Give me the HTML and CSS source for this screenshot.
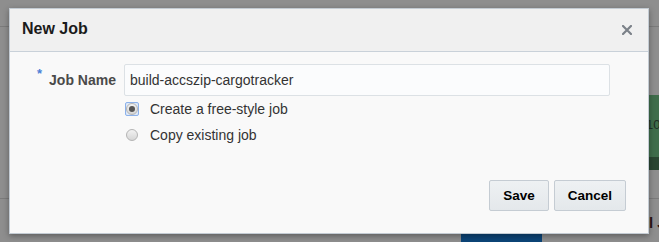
FILE: index.html
```html
<!DOCTYPE html>
<html lang="en">
<head>
    <meta charset="UTF-8">
    <title>New Job</title>
    <link rel="stylesheet" href="styles.css">
</head>
<body>
    <!-- dimmed page behind the dialog -->
    <div class="backdrop">
        <div class="bg-nav"></div>
        <div class="bg-main">
            <div class="tile">
                <span class="tile-num">10</span>
                <div class="tile-foot"></div>
            </div>
        </div>
        <div class="bg-foot">
            <div class="bg-bar"></div>
            <span class="bg-text">l J</span>
        </div>
    </div>

    <div class="dialog">
        <div class="dialog-header">
            <h1 class="dialog-title">New Job</h1>
            <button class="close-btn" title="Close">
                <svg width="10" height="10" viewBox="0 0 10 10">
                    <path d="M1 1 L9 9 M9 1 L1 9" stroke="#7b8188" stroke-width="2.2" stroke-linecap="square"/>
                </svg>
            </button>
        </div>

        <div class="dialog-body">
            <div class="field-row">
                <label class="field-label" for="jobName"><span class="req">*</span>Job Name</label>
                <input class="text-input" type="text" id="jobName" value="build-accszip-cargotracker">
            </div>
            <div class="options">
                <label class="option">
                    <span class="radio-wrap focused"><span class="radio checked"></span></span>
                    Create a free-style job
                </label>
                <label class="option">
                    <span class="radio-wrap"><span class="radio"></span></span>
                    Copy existing job
                </label>
            </div>
        </div>

        <div class="dialog-footer">
            <button class="btn">Save</button>
            <button class="btn">Cancel</button>
        </div>
    </div>
</body>
</html>
```

FILE: styles.css
```css
* {
    margin: 0;
    padding: 0;
    box-sizing: border-box;
}
body {
    font-family: "Liberation Sans", Arial, sans-serif;
    background-color: #8e8e8e;
    color: #333;
    width: 659px;
    height: 242px;
    overflow: hidden;
}

/* Backdrop */
.backdrop {
    display: flex;
    flex-direction: column;
    height: 242px;
}
.bg-nav {
    height: 27px;
    border-bottom: 1px solid #7b7b7b;
}
.bg-main {
    height: 172px;
    display: flex;
    justify-content: flex-end;
    align-items: flex-start;
    padding-top: 68px;
    border-bottom: 1px solid #7b7b7b;
}
.tile {
    width: 30px;
    height: 75px;
    background-color: #3f6d4b;
    display: flex;
    flex-direction: column;
    justify-content: space-between;
}
.tile-num {
    font-size: 13px;
    color: #1f2f24;
    padding: 23px 0 0 17px;
    line-height: 14px;
}
.tile-foot {
    height: 13px;
    background-color: #2a4632;
}
.bg-foot {
    flex: 1;
    display: flex;
    align-items: flex-start;
}
.bg-bar {
    width: 81px;
    height: 9px;
    margin: 34px 0 0 461px;
    background-color: #0c4477;
}
.bg-text {
    margin: 15px 0 0 auto;
    padding-right: 1px;
    width: 10px;
    font-size: 15px;
    font-weight: bold;
    color: #2a1414;
    white-space: nowrap;
    overflow: hidden;
}

/* Dialog */
.dialog {
    position: absolute;
    left: 9px;
    top: 8px;
    width: 640px;
    height: 226px;
    background-color: #f9f9f9;
    border: 1px solid #c3cbd3;
    box-shadow: 0 2px 6px rgba(0, 0, 0, 0.35);
    display: flex;
    flex-direction: column;
}
.dialog-header {
    height: 43px;
    background-color: #f0f0f0;
    border-bottom: 1px solid #c9d1d9;
    display: flex;
    align-items: center;
    justify-content: space-between;
    padding: 0 16px 0 12px;
}
.dialog-title {
    font-size: 16px;
    font-weight: bold;
    color: #1b1b1b;
    padding-bottom: 2px;
}
.close-btn {
    background: none;
    border: none;
    width: 10px;
    height: 10px;
    display: flex;
}

.dialog-body {
    flex: 1;
    padding-top: 12px;
}
.field-row {
    display: flex;
    align-items: center;
    gap: 8px;
}
.field-label {
    width: 106px;
    text-align: right;
    font-size: 14px;
    font-weight: bold;
    color: #4a4a4a;
    position: relative;
}
.req {
    position: absolute;
    left: 27px;
    top: -6px;
    font-size: 13px;
    color: #4a7fd6;
}
.text-input {
    width: 486px;
    height: 32px;
    background-color: #fbfcfd;
    border: 1px solid #dce1e5;
    border-radius: 2px;
    padding: 0 5px;
    font-family: "Liberation Sans", Arial, sans-serif;
    font-size: 14px;
    color: #333;
    outline: none;
}

.options {
    padding-left: 115px;
}
.option {
    height: 26px;
    display: flex;
    align-items: center;
    gap: 11px;
    font-size: 14px;
    color: #333;
}
.radio-wrap {
    width: 14px;
    height: 14px;
    display: flex;
    align-items: center;
    justify-content: center;
    border-radius: 2px;
}
.radio-wrap.focused {
    border: 1px solid #8cb1ea;
    background-color: #dce8f8;
}
.radio {
    width: 12px;
    height: 12px;
    border-radius: 50%;
    border: 1px solid #b4b4b4;
    background: linear-gradient(#f2f2f2, #d6d6d6);
    display: flex;
    align-items: center;
    justify-content: center;
}
.radio.checked::after {
    content: "";
    width: 6px;
    height: 6px;
    border-radius: 50%;
    background-color: #555;
}

.dialog-footer {
    display: flex;
    justify-content: flex-end;
    gap: 5px;
    padding: 0 22px 22px 0;
}
.btn {
    height: 31px;
    padding: 0 13px;
    background: linear-gradient(#eef1f3, #e4e8eb);
    border: 1px solid #c5ccd3;
    border-radius: 2px;
    font-family: "Liberation Sans", Arial, sans-serif;
    font-size: 13.5px;
    font-weight: bold;
    color: #000;
}
```
